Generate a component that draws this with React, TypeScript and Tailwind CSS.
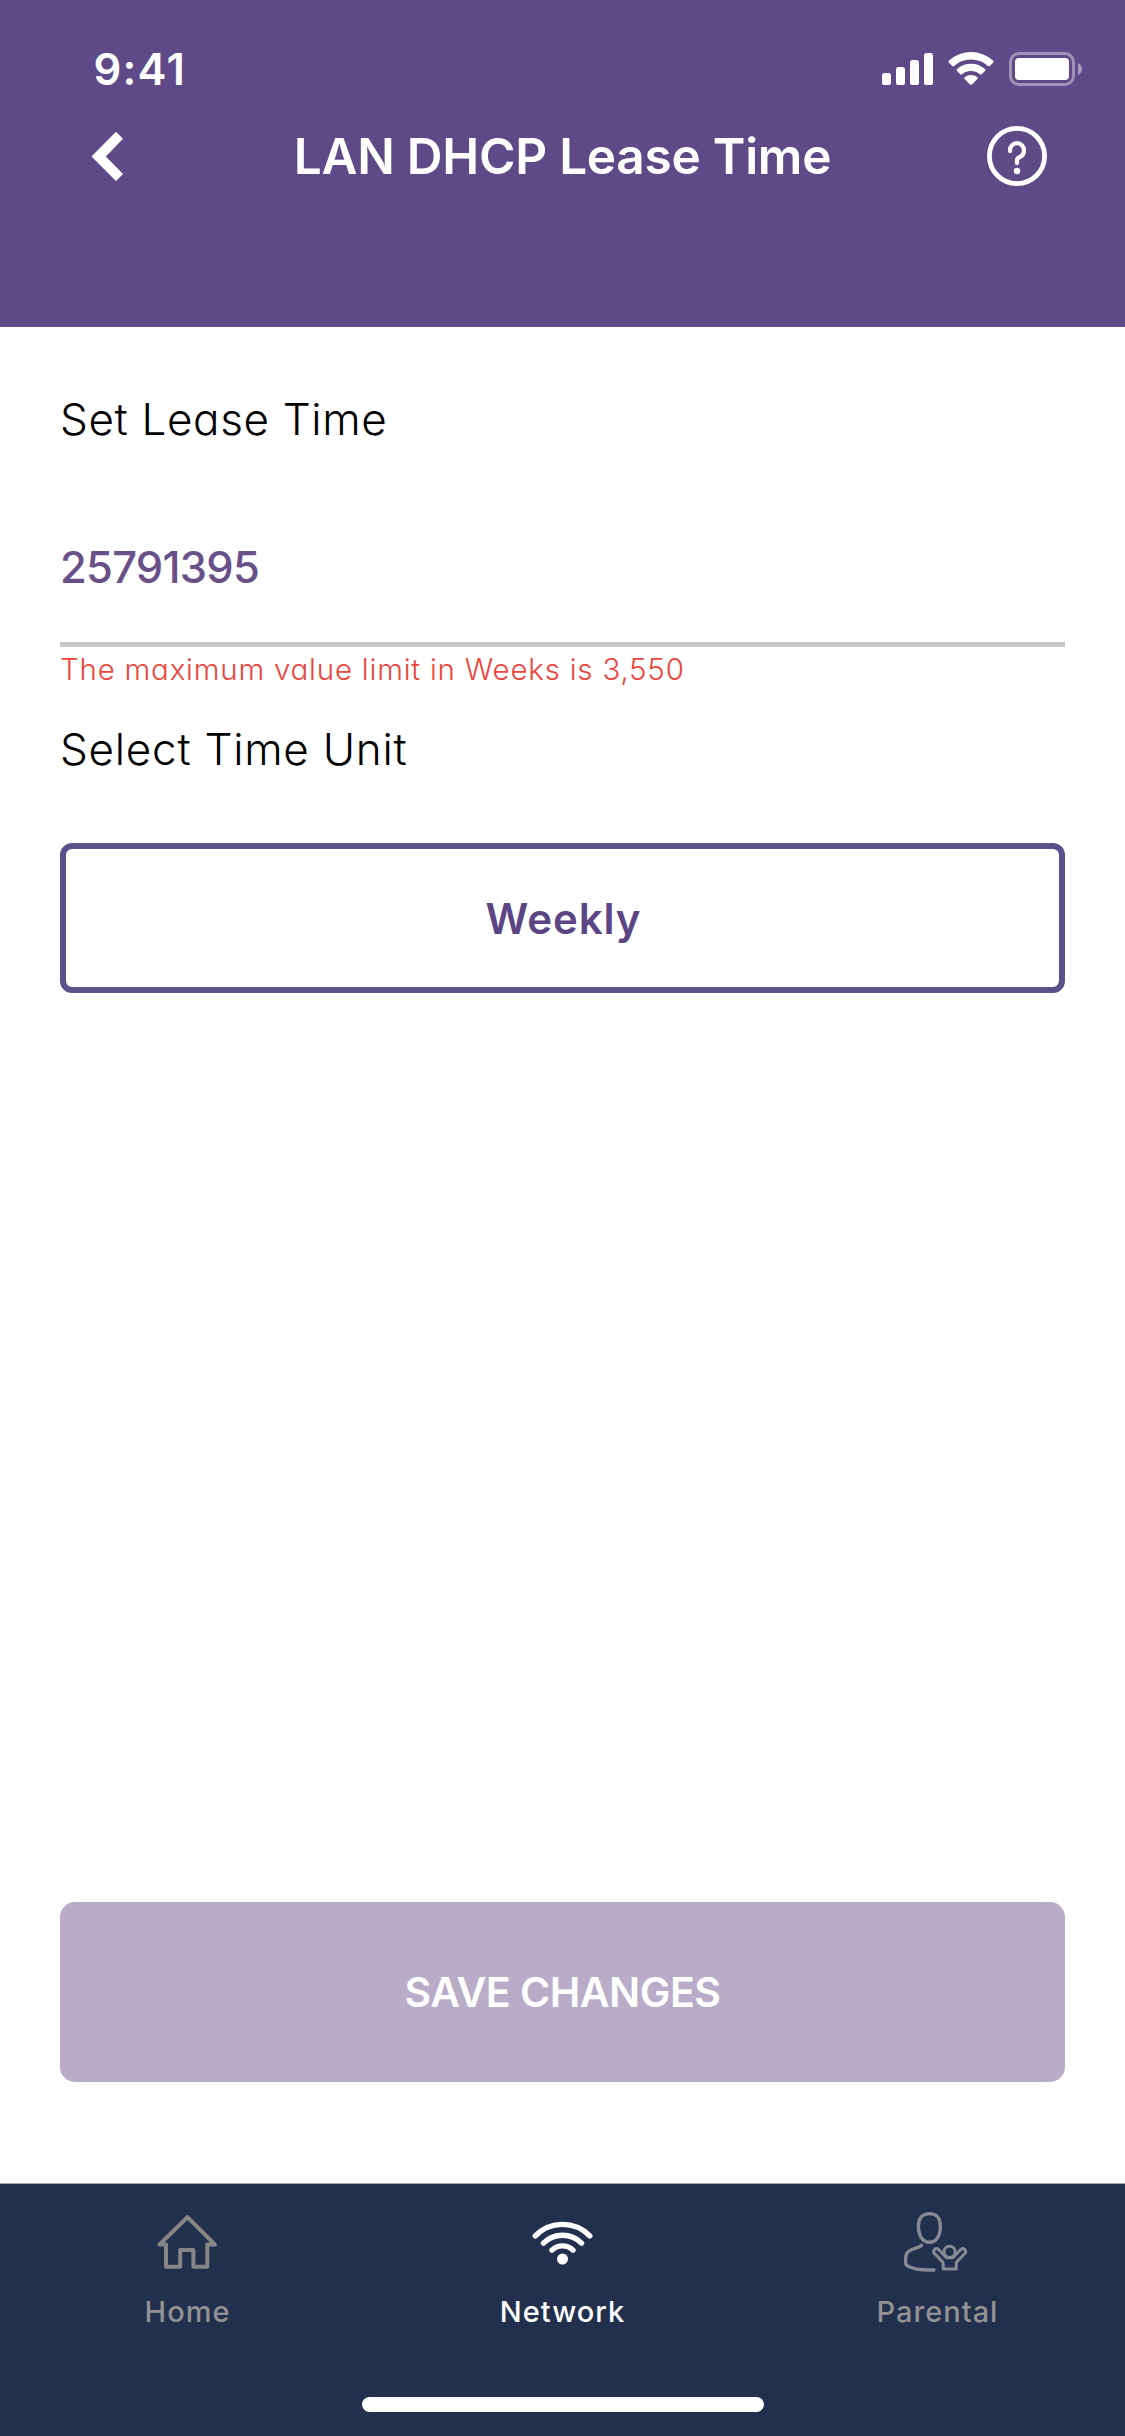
import type { ReactNode } from 'react';

function StatusIcons() {
  return (
    <svg width="204" height="40" viewBox="880 49 204 40" className="ml-auto mr-[41px]" fill="#fff">
      <rect x="882" y="73" width="9" height="12" rx="2.6" />
      <rect x="896" y="67" width="9" height="18" rx="2.6" />
      <rect x="910" y="60" width="9" height="25" rx="2.6" />
      <rect x="924" y="53" width="9" height="32" rx="2.6" />
      <path d="M949 60.6 Q948 61.6 949 62.7 L952.2 65.9 Q953.2 66.8 954.2 65.9 A25 25 0 0 1 987.8 65.9 Q988.8 66.8 989.8 65.9 L993 62.7 Q994 61.6 993 60.6 A32.6 32.6 0 0 0 949 60.6Z" />
      <path d="M957 69 Q956 70 957 71 L960.3 74.3 Q961.2 75 962.2 74.3 A13.6 13.6 0 0 1 979.8 74.3 Q980.8 75 981.7 74.3 L985 71 Q986 70 985 69 A21 21 0 0 0 957 69Z" />
      <path d="M964.6 77.2 A10 10 0 0 1 977.4 77.2 Q978.3 78 977.4 79 L972 84.4 Q971 85.2 970 84.4 L964.6 79 Q963.7 78 964.6 77.2Z" />
      <rect x="1010.5" y="53.5" width="63" height="31" rx="8.5" fill="none" stroke="#fff" strokeOpacity=".4" strokeWidth="3" />
      <rect x="1015" y="58" width="54" height="22" rx="4" />
      <path d="M1078 63.2 A6.4 6.4 0 0 1 1078 75Z" fillOpacity=".45" />
    </svg>
  );
}

function BackIcon() {
  return (
    <svg width="34" height="50" viewBox="0 0 34 50" className="ml-[91px]" fill="#fff" aria-label="Back">
      <path d="M25 0.8 L32 7.8 L14.8 25.4 L32 43 L25 50 L0.5 25.4Z" />
    </svg>
  );
}

function HelpIcon() {
  return (
    <svg width="60" height="60" viewBox="0 0 60 60" className="ml-auto mr-[78px]" fill="none" stroke="#fff" aria-label="Help">
      <circle cx="30" cy="30" r="27.6" strokeWidth="4.8" />
      <path d="M23 25 V24.2 A7 7 0 0 1 37 24.2 Q37 29 32.8 31 Q30 32.2 30 34.4 V37" strokeWidth="4.3" strokeLinecap="round" />
      <circle cx="30" cy="45" r="3.2" fill="#fff" stroke="none" />
    </svg>
  );
}

function HomeIcon() {
  return (
    <svg width="64" height="64" viewBox="156 2210 64 64" fill="none" stroke="#868686" strokeWidth="4" strokeLinejoin="round" strokeLinecap="round">
      <path d="M187.4 2217.2 L215 2244.6 H207.3 V2266.8 H193.4 V2250 H180.2 V2266.8 H166 V2244.6 H159.4Z" />
    </svg>
  );
}

function NetworkIcon() {
  return (
    <svg width="64" height="64" viewBox="530.5 2210.5 64 64" fill="none" stroke="#fff" strokeWidth="5.4" strokeLinecap="round">
      <path d="M534.8 2236.4 A38 38 0 0 1 589.3 2236.4" />
      <path d="M543 2243.6 A27 27 0 0 1 581 2243.6" />
      <path d="M551.5 2250.6 A15.2 15.2 0 0 1 572.5 2250.6" />
      <circle cx="562" cy="2259.5" r="5.5" fill="#fff" stroke="none" />
    </svg>
  );
}

function ParentalIcon() {
  return (
    <svg width="68" height="64" viewBox="904 2210 68 64" fill="none" stroke="#868a92" strokeWidth="3.4" strokeLinecap="round" strokeLinejoin="round">
      <path d="M929.5 2213.6 C937 2213.6 940.4 2218.6 940.4 2226 C940.4 2235.6 936.4 2242.2 929.5 2242.2 C922.4 2242.2 918.4 2235.6 918.4 2226 C918.4 2218.6 922.2 2213.6 929.5 2213.6Z" />
      <path d="M921.5 2245.4 Q919.5 2247 915 2248.4 Q907.6 2250.8 906.4 2254.4 Q905.3 2258 905.7 2263.4 Q905.8 2265 907.6 2266 Q916 2270.6 934 2270" />
      <circle cx="949.6" cy="2251.8" r="5.6" strokeWidth="3" />
      <path strokeWidth="3" d="M943.2 2269 V2263.6 Q943.2 2262.4 942.4 2261.6 L934.3 2253.3 A2.9 2.9 0 0 1 938.4 2249.3 L946.4 2257.8 H952.8 L961 2249.3 A2.9 2.9 0 0 1 965.1 2253.3 L957 2261.6 Q956.2 2262.4 956.2 2263.6 V2269Z" />
    </svg>
  );
}

function Tab({ icon, label, active = false }: { icon: ReactNode; label: string; active?: boolean }) {
  return (
    <button className={`flex flex-1 flex-col items-center pt-[26px] font-medium ${active ? 'text-white' : 'text-[#929292]'}`}>
      {icon}
      <span className="mt-[18px] text-[29px] leading-[40px] tracking-[1px]">{label}</span>
    </button>
  );
}

export default function App() {
  return (
    <div className="flex h-[2436px] w-[1125px] flex-col bg-white font-['Inter','Liberation_Sans',sans-serif] text-black">
      <header className="h-[327px] bg-[#5E4A87] text-white">
        <div className="flex h-[106px] items-center pt-8">
          <span className="ml-[93.5px] text-[43.5px] leading-[60px] font-semibold tracking-[1.2px]">9:41</span>
          <StatusIcons />
        </div>
        <div className="grid h-[100px] grid-cols-[280px_1fr_280px] items-center">
          <BackIcon />
          <h1 className="text-center text-[49.5px] leading-[60px] font-semibold tracking-[-0.25px] whitespace-nowrap">LAN DHCP Lease Time</h1>
          <HelpIcon />
        </div>
      </header>

      <main className="flex flex-1 flex-col px-[60px] [font-feature-settings:'cv11']">
        <h2 className="mt-[59px] text-[44px] leading-[66px] font-light tracking-[0.65px]">Set Lease Time</h2>
        <div className="mt-10 flex h-[155px] items-center border-b-[5px] border-[#C7C7C9] pt-0.5 text-[43.5px] font-medium tracking-[-0.75px] text-[#6A5088]">
          25791395
        </div>
        <p className="text-[29.5px] leading-[44px] font-light tracking-[0.77px] text-[#EB463D]">
          The maximum value limit in Weeks is 3,550
        </p>
        <h2 className="mt-[25px] text-[44px] leading-[67px] font-light tracking-[0.75px]">Select Time Unit</h2>
        <button className="mt-[60px] flex h-[150px] items-center justify-center rounded-xl border-6 border-[#5B5089] pl-0.5 text-[42px] font-semibold tracking-[0.9px] text-[#5C4584]">
          Weekly
        </button>
        <button className="mt-auto mb-[101px] flex h-[180px] items-center justify-center rounded-[15px] bg-[#B9ACC9] pt-px text-[41px] font-semibold tracking-[-0.5px] text-white">
          SAVE CHANGES
        </button>
      </main>

      <nav className="flex h-[253px] flex-col border-t border-[#A5A8AF] bg-[#22304E]">
        <div className="flex">
          <Tab icon={<HomeIcon />} label="Home" />
          <Tab icon={<NetworkIcon />} label="Network" active />
          <Tab icon={<ParentalIcon />} label="Parental" />
        </div>
        <div className="mx-auto mt-auto mb-6 h-[15px] w-[402px] rounded-full bg-white" />
      </nav>
    </div>
  );
}
